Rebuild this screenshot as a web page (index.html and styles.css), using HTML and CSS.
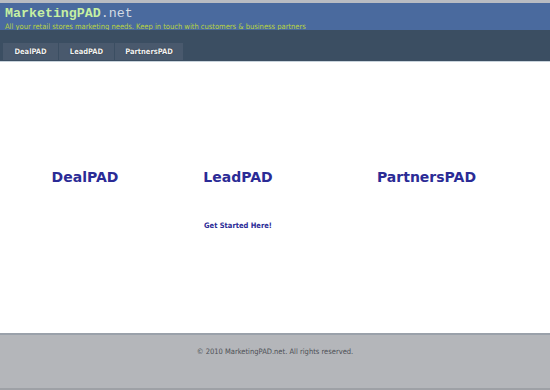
FILE: index.html
```html
<!DOCTYPE html>
<html lang="en">
<head>
  <meta charset="UTF-8">
  <title>MarketingPAD.net</title>
  <link rel="stylesheet" href="styles.css">
</head>
<body>
  <div class="header">
    <div class="logo"><span class="brand">MarketingPAD</span><span class="tld">.net</span></div>
    <div class="tagline">All your retail stores marketing needs. Keep in touch with customers &amp; business partners</div>
  </div>

  <div class="nav">
    <a class="tab" href="#">DealPAD</a>
    <a class="tab" href="#">LeadPAD</a>
    <a class="tab wide" href="#">PartnersPAD</a>
  </div>

  <div class="main">
    <div class="products">
      <h2>DealPAD</h2>
      <div class="col">
        <h2>LeadPAD</h2>
        <a class="start" href="#">Get Started Here!</a>
      </div>
      <h2>PartnersPAD</h2>
    </div>
  </div>

  <div class="footer">
    &copy; 2010 MarketingPAD.net. All rights reserved.
  </div>
</body>
</html>
```

FILE: styles.css
```css
html, body {
  margin: 0;
  padding: 0;
}
body {
  font-family: Tahoma, "DejaVu Sans", Verdana, sans-serif;
  background: #fff;
  width: 550px;
  height: 390px;
  display: flex;
  flex-direction: column;
}
.header {
  background: #4a6a9e;
  border-top: 3px solid #b9bcc2;
  height: 27px;
  padding: 0 5px;
}
.logo {
  font-family: "Liberation Mono", "DejaVu Sans Mono", monospace;
  font-size: 13.3px;
  line-height: 17px;
  padding-top: 2px;
}
.brand {
  color: #c6f0a2;
  font-weight: bold;
}
.tld {
  color: #d3dbe4;
}
.tagline {
  color: #b9d33f;
  font-family: "DejaVu Sans Condensed", "DejaVu Sans", sans-serif;
  font-size: 7.5px;
  line-height: 9px;
  margin-top: 0;
}
.nav {
  background: #3b4e62;
  height: 32px;
  padding: 13px 0 0 3px;
  box-sizing: border-box;
  display: flex;
  gap: 1px;
  border-bottom: 1px solid #c8d3dc;
}
.tab {
  width: 55px;
  height: 17px;
  background: #49596d;
  color: #f0f2f4;
  text-decoration: none;
  font-family: "DejaVu Sans Condensed", "DejaVu Sans", sans-serif;
  font-size: 7.5px;
  font-weight: bold;
  display: flex;
  align-items: center;
  justify-content: center;
  text-shadow: 0 0 1px #222;
}
.tab.wide {
  width: 68px;
}
.main {
  flex: 1;
}
.products {
  display: grid;
  grid-template-columns: 170px 136px 241px;
  padding-top: 106px;
  align-items: start;
}
.products h2,
.col h2 {
  margin: 0;
  text-align: center;
  font-family: "DejaVu Sans", Tahoma, sans-serif;
  font-size: 14px;
  font-weight: bold;
  color: #2b2b96;
  line-height: 18px;
}
.col {
  display: flex;
  flex-direction: column;
  align-items: center;
}
.start {
  margin-top: 35px;
  color: #2b2b96;
  font-family: "DejaVu Sans Condensed", "DejaVu Sans", sans-serif;
  font-size: 7.5px;
  font-weight: bold;
  text-decoration: none;
}
.footer {
  height: 57px;
  background: #b4b6ba;
  border-top: 2px solid #9aa1aa;
  border-bottom: 2px solid #9ea1a6;
  color: #4d5056;
  font-family: "DejaVu Sans Condensed", "DejaVu Sans", sans-serif;
  font-size: 7.5px;
  text-align: center;
  padding-top: 12px;
  box-sizing: border-box;
}
```
